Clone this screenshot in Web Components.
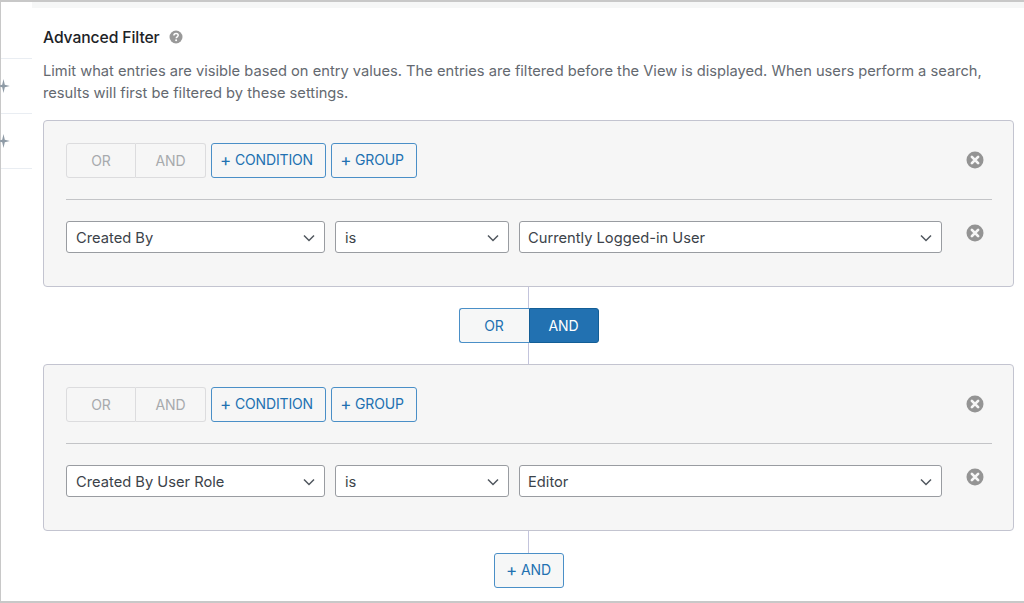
<!DOCTYPE html>
<html><head><meta charset="utf-8"><style>
html,body{margin:0;padding:0;background:#fff}
body{font-family:Inter,"Liberation Sans",sans-serif;width:1024px;height:603px;overflow:hidden}
</style></head><body>
<af-page>
<af-group-box>
<af-select slot="a" style="width:259px">Created By</af-select>
<af-select slot="b" style="width:174px">is</af-select>
<af-select slot="c" style="width:423px;padding-left:8px">Currently Logged-in User</af-select>
</af-group-box>
<af-connector></af-connector>
<af-group-box>
<af-select slot="a" style="width:259px">Created By User Role</af-select>
<af-select slot="b" style="width:174px">is</af-select>
<af-select slot="c" style="width:423px;padding-left:8px">Editor</af-select>
</af-group-box>
<af-add></af-add>
</af-page>
<script>
const XICON='<svg width="18" height="18" viewBox="0 0 18 18" aria-hidden="true"><circle cx="9" cy="9" r="8.500" fill="#949494"/><path d="M5.900 5.900l6.200 6.200M12.100 5.900l-6.200 6.200" stroke="#f6f6f6" stroke-width="2.700" stroke-linecap="round"/></svg>';
const SPARK='<svg width="13" height="16" viewBox="0 0 13 16"><path d="M6.500 1l1.300 5.700 5 1.300-5 1.300L6.500 15 5.200 9.300.2 8l5-1.300z" fill="#8f9ba6"/></svg>';
function def(name,html){customElements.define(name,class extends HTMLElement{constructor(){super();this.attachShadow({mode:'open'}).innerHTML=html}})}
const btn=`button{font:14px/1 Inter,"Liberation Sans",sans-serif;box-sizing:border-box;height:35px;margin:0;padding:0;background:#f6f7f7;color:#2271b1;border:1px solid #4a8fc7;border-radius:3px;letter-spacing:-.15px}
b{font-weight:400;font-size:17px;line-height:1;vertical-align:-1px}`;
def('af-page',`<style>
:host{display:flex;box-sizing:border-box;width:1024px;height:603px;border:solid #c8c8c8;border-width:2px 0 2px 1px}
.side{width:31px;flex:none;display:flex;flex-direction:column;padding-top:56px}
.side div{box-sizing:border-box;height:55px;border-top:1px solid #e9edf2;display:flex;align-items:center}
.side div:last-child{height:1px}
.side svg{margin-left:-4px}
.main{flex:1;min-width:0;display:flex;flex-direction:column}
.strip{height:6px;background:#f6f7f7;flex:none}
.body{padding:18px 10px 0 11px;display:flex;flex-direction:column}
h2{margin:0;font-size:15.700px;line-height:24px;font-weight:500;color:#1d2327;display:flex;align-items:center;gap:9px;letter-spacing:-.1px}
h2 svg{margin-top:-3px}
p{margin:10px 0 16px;font-size:14.680px;line-height:22px;color:#646970;white-space:nowrap}
</style>
<div class="side"><div>${SPARK}</div><div>${SPARK}</div><div></div></div>
<div class="main"><div class="strip"></div><div class="body">
<h2>Advanced Filter <svg width="14" height="14" viewBox="0 0 14 14" aria-hidden="true"><circle cx="7" cy="7" r="6.500" fill="#999"/><path d="M4.900 5.500c0-1.300 1-2 2.200-2s2.100.7 2.100 1.800c0 1.500-2 1.600-2 3" fill="none" stroke="#fff" stroke-width="1.500"/><circle cx="7.100" cy="10.300" r="1" fill="#fff"/></svg></h2>
<p>Limit what entries are visible based on entry values. The entries are filtered before the View is displayed. When users perform a search,<br>results will first be filtered by these settings.</p>
<slot></slot>
</div></div>`);
def('af-group-box',`<style>
:host{display:block;box-sizing:border-box;width:971px;height:167px;background:#f6f6f6;border:1px solid #c3c4d0;border-radius:4px;padding:22px 21px 0 22px}
${btn}
button{background:#f6f6f6}
.top{display:flex;align-items:center;height:35px}
.seg{display:flex;margin-right:5px}
.seg button{width:70px;color:#a7aaad;border-color:#dcdcde;border-radius:3px 0 0 3px}
.seg button+button{border-left:0;border-radius:0 3px 3px 0}
.add{margin-right:5px;padding:0 4px 0 0;white-space:nowrap}
.x{margin-left:auto;margin-right:8px;display:flex}
.top .x{margin-top:-2px}
hr{margin:21px 0 21px;border:0;height:1px;background:#c3c4c7;width:926px}
.row{display:flex;gap:10px;align-items:flex-start}
.row .x{margin-top:3px}
</style>
<div class="top"><div class="seg"><button disabled>OR</button><button disabled>AND</button></div><button class="add" style="width:115px"><b>+</b> CONDITION</button><button class="add" style="width:86px"><b>+</b> GROUP</button><span class="x">${XICON}</span></div>
<hr>
<div class="row"><slot name="a"></slot><slot name="b"></slot><slot name="c"></slot><span class="x">${XICON}</span></div>`);
def('af-select',`<style>
:host{display:flex;align-items:center;justify-content:space-between;box-sizing:border-box;height:32px;background:#fff;border:1px solid #999ca1;border-radius:3px;padding:1px 9px 0;font-size:14.700px;color:#3c434a}
</style><slot></slot><svg width="12" height="8" viewBox="0 0 12 8" aria-hidden="true"><path d="M1 1.500l5 5 5-5" fill="none" stroke="#50575e" stroke-width="1.500"/></svg>`);
def('af-connector',`<style>
:host{display:flex;justify-content:center;align-items:center;height:77px;width:971px;position:relative}
${btn}
.line{position:absolute;left:485px;top:0;bottom:0;width:1px;background:#c3c4dc}
.seg{display:flex;position:relative}
button{width:70px;border-radius:3px 0 0 3px;border-right:0}
button+button{background:#2271b1;color:#fff;border-color:#135e96;border-radius:0 3px 3px 0;border-right:1px solid #135e96}
</style><div class="line"></div><div class="seg"><button>OR</button><button>AND</button></div>`);
def('af-add',`<style>
:host{display:flex;flex-direction:column;align-items:center;width:971px}
${btn}
.line{width:1px;height:22px;background:#c3c4dc}
button{width:70px}
</style><div class="line"></div><button><b>+</b> AND</button>`);
</script>
</body></html>
